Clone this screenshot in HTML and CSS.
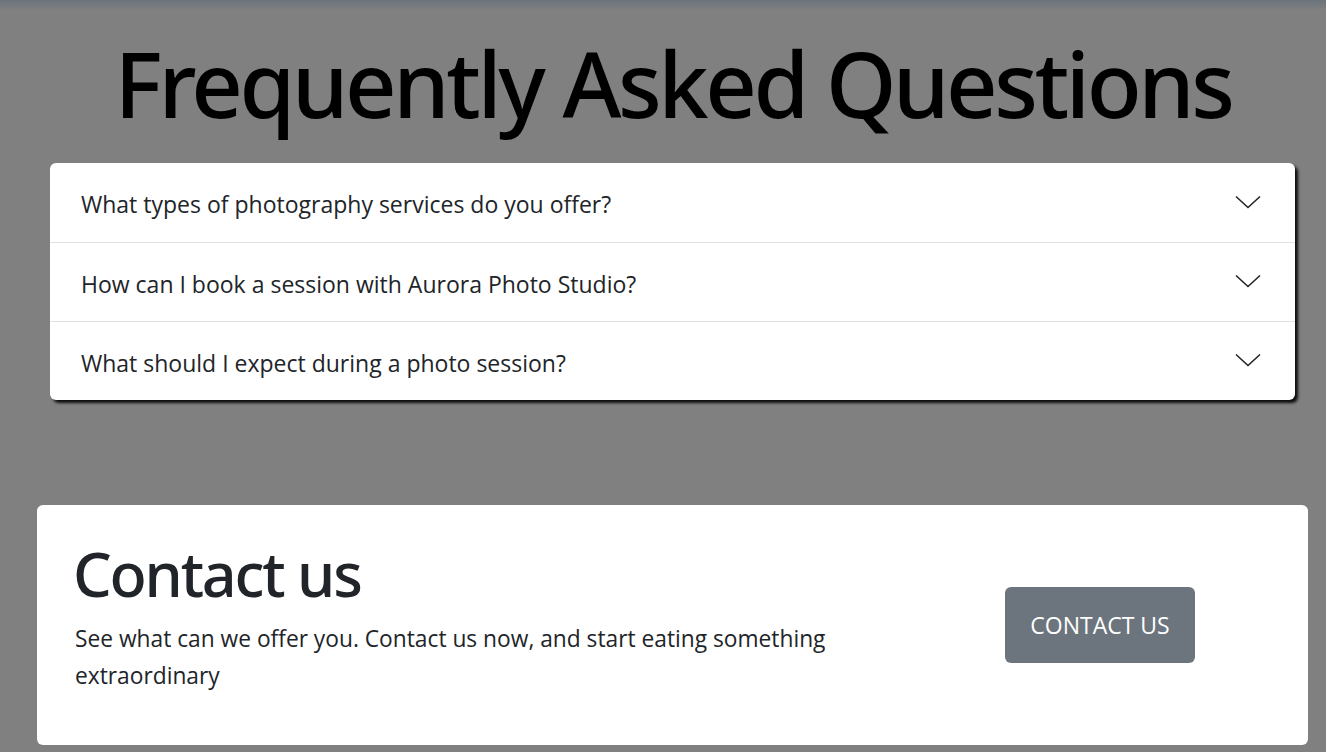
FILE: index.html
```html
<!DOCTYPE html>
<html lang="en">
<head>
<meta charset="utf-8">
<title>FAQ</title>
<link rel="stylesheet" href="styles.css">
</head>
<body>
<div class="topbar"></div>
<h1 class="faq-title">Frequently Asked Questions</h1>
<div class="accordion">
  <div class="acc-item">
    <span class="acc-q">What types of photography services do you offer?</span>
    <svg class="chev" width="26" height="14" viewBox="0 0 26 14"><path d="M1 1.5 L13 12.5 L25 1.5" fill="none" stroke="#212529" stroke-width="1.6"/></svg>
  </div>
  <div class="acc-item">
    <span class="acc-q">How can I book a session with Aurora Photo Studio?</span>
    <svg class="chev" width="26" height="14" viewBox="0 0 26 14"><path d="M1 1.5 L13 12.5 L25 1.5" fill="none" stroke="#212529" stroke-width="1.6"/></svg>
  </div>
  <div class="acc-item">
    <span class="acc-q">What should I expect during a photo session?</span>
    <svg class="chev" width="26" height="14" viewBox="0 0 26 14"><path d="M1 1.5 L13 12.5 L25 1.5" fill="none" stroke="#212529" stroke-width="1.6"/></svg>
  </div>
</div>
<section class="contact">
  <div class="contact-text">
    <h2 class="contact-title">Contact us</h2>
    <p class="contact-p">See what can we offer you. Contact us now, and start eating something extraordinary</p>
  </div>
  <a class="contact-btn" href="#">CONTACT US</a>
</section>
</body>
</html>
```
FILE: styles.css
```css
html, body {
  margin: 0;
  padding: 0;
}
body {
  background: #808080;
  font-family: "Open Sans", "Noto Sans", sans-serif;
  color: #212529;
  height: 752px;
  overflow: hidden;
}
.topbar {
  height: 10px;
  background: linear-gradient(#6b737b 0px, #72787e 4px, #808080 10px);
}
.faq-title {
  margin: 19px 0 0 0;
  padding-left: 20px;
  text-align: center;
  font-family: "Noto Sans", "Open Sans", sans-serif;
  font-weight: 500;
  font-size: 90px;
  line-height: 108px;
  color: #000;
  letter-spacing: -3.4px;
}
.accordion {
  margin: 26px 0 0 50px;
  width: 1245px;
  background: #fff;
  border-radius: 6px;
  box-shadow: 3px 3px 3px rgba(0,0,0,0.9);
  overflow: hidden;
}
.acc-item {
  height: 79px;
  display: flex;
  align-items: center;
  justify-content: space-between;
  padding: 0 34px 0 31px;
  box-sizing: border-box;
  border-top: 1px solid #dee2e6;
}
.acc-item:first-child {
  border-top: none;
}
.acc-q {
  font-size: 23px;
  color: #212529;
  padding-top: 3px;
}
.chev {
  display: block;
  margin-top: -2px;
}
.contact {
  margin: 105px 0 0 37px;
  width: 1271px;
  height: 240px;
  box-sizing: border-box;
  background: #fff;
  border-radius: 6px;
  padding: 0 113px 0 38px;
  display: flex;
  align-items: center;
  justify-content: space-between;
}
.contact-text {
  width: 790px;
  align-self: flex-start;
  margin-top: 32px;
}
.contact-title {
  margin: 0 0 0 -2px;
  font-family: "Noto Sans", "Open Sans", sans-serif;
  font-size: 61px;
  font-weight: 500;
  line-height: 73px;
  letter-spacing: -2.2px;
}
.contact-p {
  margin: 10px 0 0 0;
  font-size: 22.75px;
  line-height: 37px;
}
.contact-btn {
  display: flex;
  align-items: center;
  justify-content: center;
  width: 190px;
  height: 76px;
  background: #6c757d;
  color: #fff;
  border-radius: 6px;
  text-decoration: none;
  font-size: 23px;
}
```
